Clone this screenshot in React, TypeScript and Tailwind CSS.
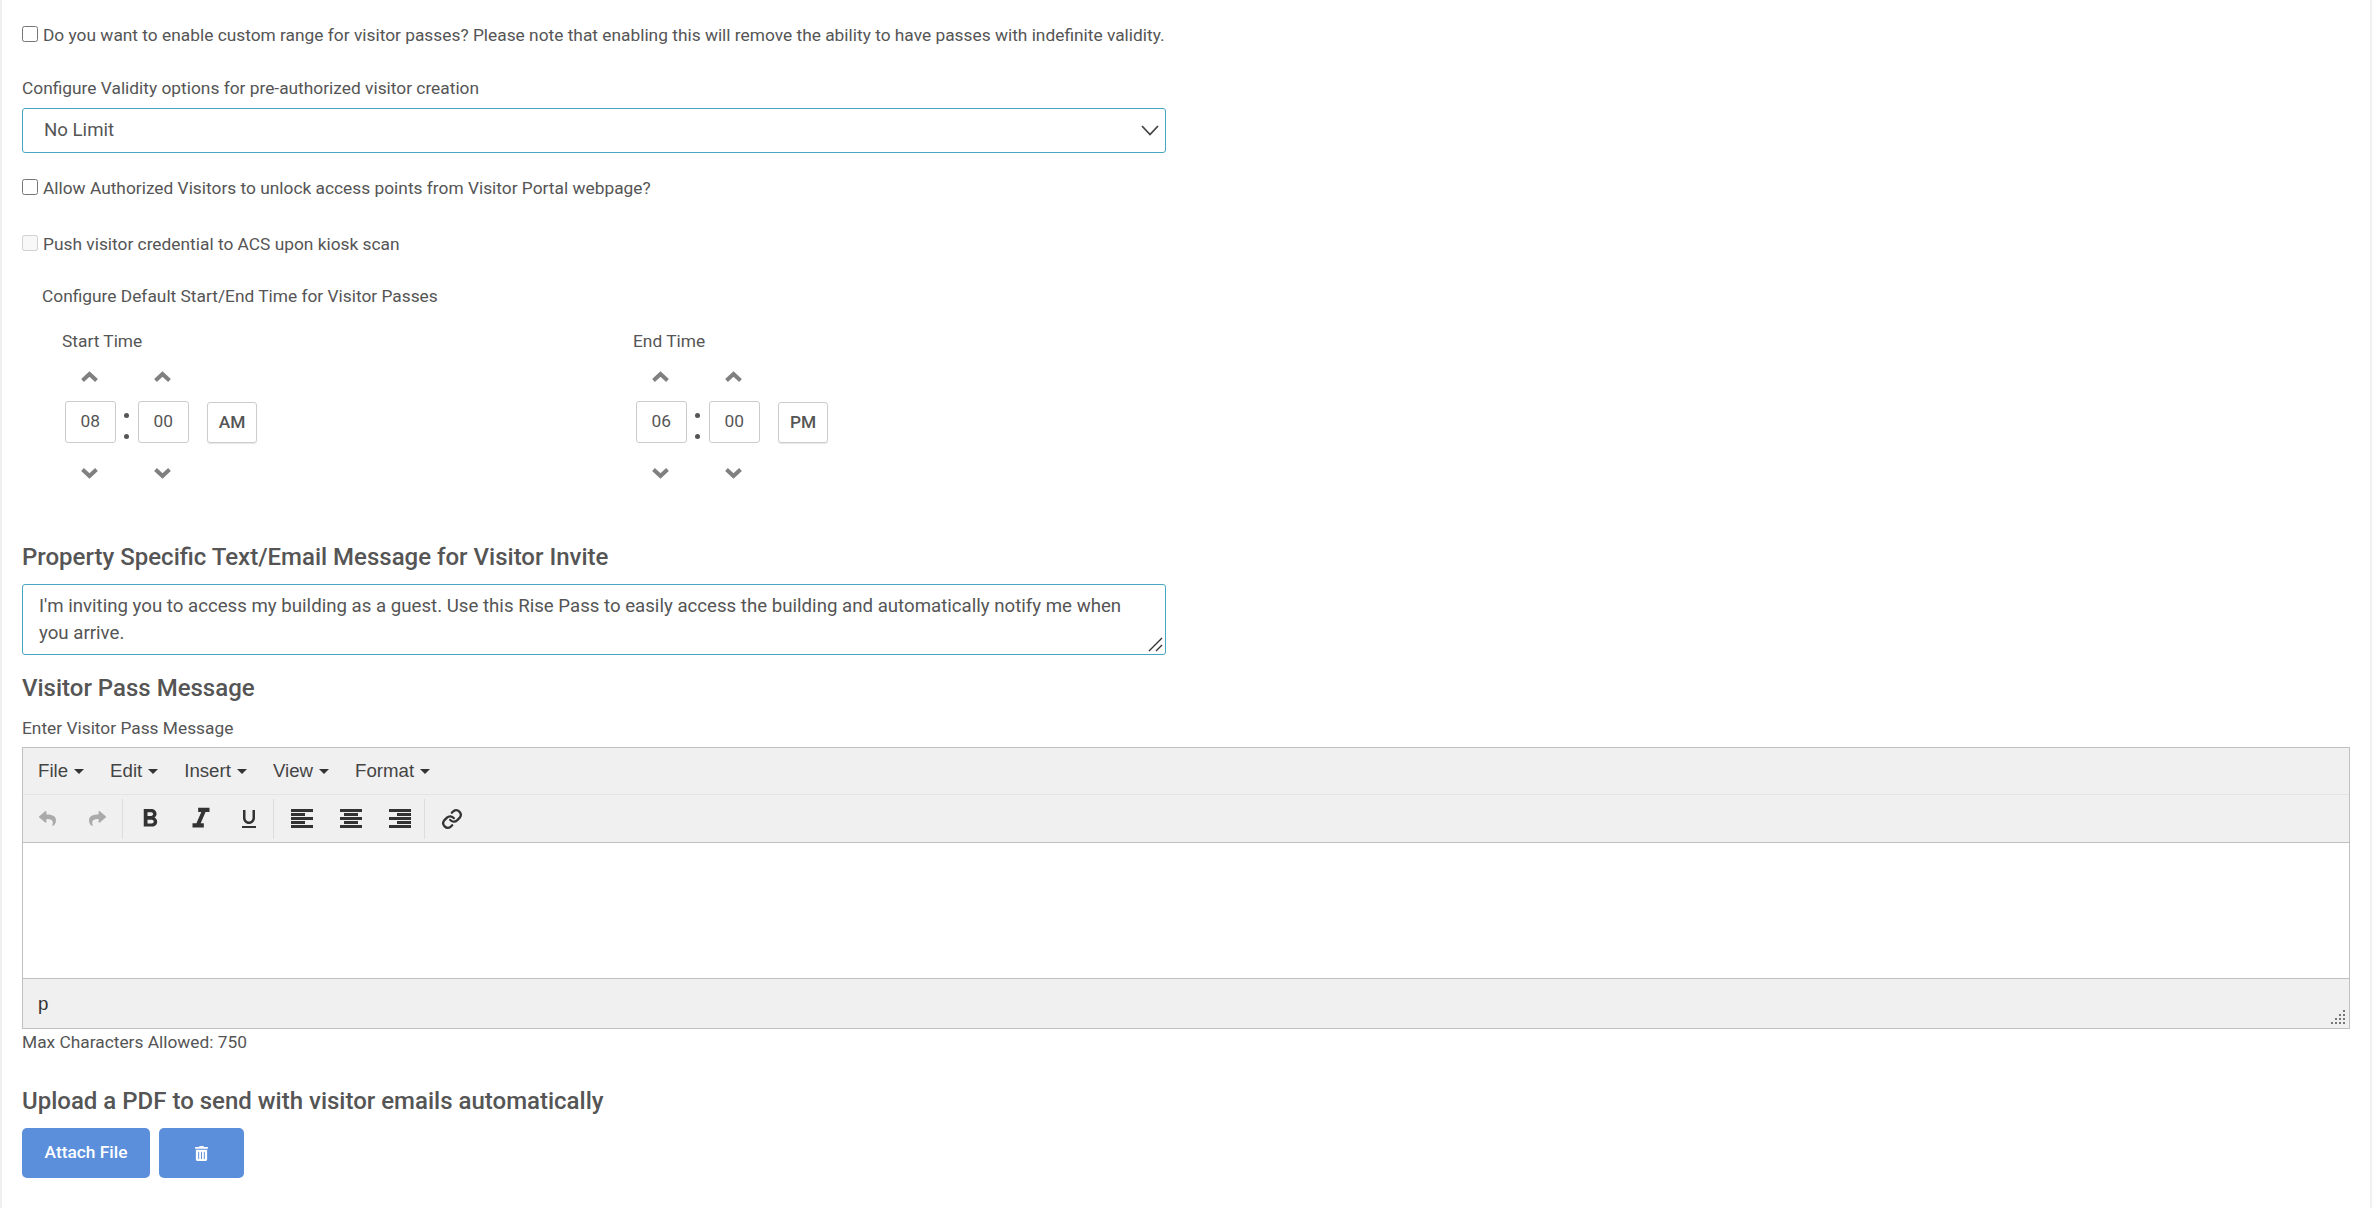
import { FaReply, FaShare, FaTrashAlt } from 'react-icons/fa'
import { MdFormatBold, MdFormatItalic, MdFormatUnderlined } from 'react-icons/md'

const menuItems = ['File', 'Edit', 'Insert', 'View', 'Format']

function AlignIcon({ side }: { side: 'left' | 'center' | 'right' }) {
  // short bars sit against the side the text is aligned to
  const shortX = side === 'left' ? 0 : side === 'center' ? 4 : 8
  return (
    <svg width="22" height="19" viewBox="0 0 22 19" fill="#333">
      <rect x="0" y="0" width="22" height="3" />
      <rect x={shortX} y="4" width="14" height="3" />
      <rect x="0" y="8" width="22" height="3" />
      <rect x={shortX} y="12" width="14" height="3" />
      <rect x="0" y="16" width="22" height="3" />
    </svg>
  )
}

function Chevron({ down }: { down?: boolean }) {
  return (
    <svg width="17" height="12" viewBox="0 0 17 12" fill="none" stroke="#808080" strokeWidth="4">
      <path d={down ? 'M1.500 2.500 8.500 9 15.500 2.500' : 'M1.500 9.500 8.500 3 15.500 9.500'} />
    </svg>
  )
}

function TimeColumn({ value }: { value: string }) {
  return (
    <div className="flex w-[50.5px] flex-col items-center pt-[3px]">
      <div className="pr-[2px]">
        <Chevron />
      </div>
      <div className="mb-[24px] mt-[18px] flex h-[42px] w-full items-center justify-center rounded-[3px] border border-[#ccc] text-[17.33px] text-[#555]">
        {value}
      </div>
      <div className="pr-[2px]">
        <Chevron down />
      </div>
    </div>
  )
}

function TimePicker({ label, hour, minute, period }: { label: string; hour: string; minute: string; period: string }) {
  return (
    <div className="w-[571px] shrink-0">
      <div className="leading-[24px]">{label}</div>
      <div className="ml-[3px] mt-[15px] flex">
        <TimeColumn value={hour} />
        <div className="flex w-[22.5px] flex-col items-center pt-[45px]">
          <span className="h-[5px] w-[5px] rounded-full bg-[#555]" />
          <span className="mt-[16px] h-[5px] w-[5px] rounded-full bg-[#555]" />
        </div>
        <TimeColumn value={minute} />
        <div className="ml-[18.5px] mt-[34px] flex h-[41px] w-[50px] items-center justify-center rounded-[3px] border border-[#ccc] text-[17.33px] font-medium text-[#555] shadow-[0_1px_1px_rgba(0,0,0,0.1)]">
          {period}
        </div>
      </div>
    </div>
  )
}

export default function App() {
  return (
    <div className="min-h-[1208px] border-x-[2px] border-[#f0f0f0] px-[20px] pt-[24px] font-['Roboto',sans-serif] text-[17.33px] text-[#555]">
      <div className="w-[1144px]">
        <label className="flex h-[22px] items-center">
          <input type="checkbox" className="mb-[2px] mr-[5px] h-[16px] w-[16px]" />
          <span className="mt-[2px]">Do you want to enable custom range for visitor passes? Please note that enabling this will remove the ability to have passes with indefinite validity.</span>
        </label>

        <div className="mt-[30px] leading-[24px]">Configure Validity options for pre-authorized visitor creation</div>
        <div className="mt-[8px] flex h-[45px] items-center justify-between rounded-[3px] border border-[#46a6c4] pb-[1px] pl-[21px] pr-[6px] text-[18.67px]">
          <span>No Limit</span>
          <svg width="18" height="11" viewBox="0 0 18 11" fill="none" stroke="#444" strokeWidth="1.800">
            <path d="M1 1 9 9.500 17 1" />
          </svg>
        </div>

        <label className="mt-[24px] flex h-[22px] items-center">
          <input type="checkbox" className="mb-[2px] mr-[5px] h-[16px] w-[16px]" />
          <span className="mt-[2px]">Allow Authorized Visitors to unlock access points from Visitor Portal webpage?</span>
        </label>

        <label className="mt-[34px] flex h-[22px] items-center">
          <input type="checkbox" disabled className="mb-[2px] mr-[5px] h-[16px] w-[16px]" />
          <span className="mt-[2px]">Push visitor credential to ACS upon kiosk scan</span>
        </label>

        <div className="ml-[20px] mt-[29px] leading-[24px]">Configure Default Start/End Time for Visitor Passes</div>

        <div className="ml-[40px] mt-[21px] flex">
          <TimePicker label="Start Time" hour="08" minute="00" period="AM" />
          <TimePicker label="End Time" hour="06" minute="00" period="PM" />
        </div>

        <h3 className="mt-[62px] text-[24px] font-medium leading-[32px]">Property Specific Text/Email Message for Visitor Invite</h3>
        <div className="relative mt-[11px] h-[71px] rounded-[3px] border border-[#46a6c4] px-[16px] pt-[8px] text-[18.67px] leading-[27px]">
          I'm inviting you to access my building as a guest. Use this Rise Pass to easily access the building and automatically notify me when you arrive.
          <svg className="absolute bottom-[2px] right-[2px]" width="16" height="16" viewBox="0 0 16 16" stroke="#333" strokeWidth="1.400">
            <path d="M2 15 15 2M9 15 15 9" />
          </svg>
        </div>

        <h3 className="mt-[17px] text-[24px] font-medium leading-[32px]">Visitor Pass Message</h3>
      </div>

      <div className="mt-[12px] leading-[24px]">Enter Visitor Pass Message</div>

      <div className="mt-[7px] w-[2328px] border border-[#c0c0c0] font-['Liberation_Sans',sans-serif] text-[#333]">
        <div className="flex h-[47px] items-center gap-[26px] border-b border-[#e4e4e4] bg-[#f0f0f0] pl-[15px] text-[18.67px]">
          {menuItems.map((item) => (
            <span key={item} className="flex items-center gap-[6px] text-[#444]">
              {item}
              <span className="h-0 w-0 border-x-[5px] border-t-[5px] border-x-transparent border-t-[#333]" />
            </span>
          ))}
        </div>
        <div className="flex h-[48px] items-center border-b border-[#c0c0c0] bg-[#f0f0f0]">
          <div className="flex h-[40px] w-[100px] items-center justify-around border-r border-[#ddd] text-[#aaa]">
            <FaReply size={17} />
            <FaShare size={17} />
          </div>
          <div className="flex h-[40px] w-[151px] items-center justify-around border-r border-[#ddd] px-[2px] text-[#333]">
            <MdFormatBold size={30} />
            <MdFormatItalic size={34} />
            <MdFormatUnderlined size={24} />
          </div>
          <div className="flex h-[40px] w-[151px] items-center justify-around border-r border-[#ddd] pl-[3px]">
            <AlignIcon side="left" />
            <AlignIcon side="center" />
            <AlignIcon side="right" />
          </div>
          <div className="ml-[16px]">
            <svg width="22" height="22" viewBox="0 0 24 24" fill="none" stroke="#333" strokeWidth="2.500" strokeLinecap="round" strokeLinejoin="round">
              <path d="M10 13a5 5 0 0 0 7.500.5l3-3a5 5 0 0 0-7-7l-1.700 1.700" />
              <path d="M14 11a5 5 0 0 0-7.500-.5l-3 3a5 5 0 0 0 7 7l1.700-1.700" />
            </svg>
          </div>
        </div>
        <div className="h-[135px] bg-white" />
        <div className="relative flex h-[50px] items-center border-t border-[#c0c0c0] bg-[#f0f0f0] pl-[15px] text-[18.67px]">
          p
          <svg className="absolute bottom-[4px] right-[4px]" width="14" height="14" viewBox="0 0 14 14" fill="#777">
            <path d="M12 0h2v2h-2zM8 4h2v2H8zM12 4h2v2h-2zM4 8h2v2H4zM8 8h2v2H8zM12 8h2v2h-2zM0 12h2v2H0zM4 12h2v2H4zM8 12h2v2H8zM12 12h2v2h-2z" />
          </svg>
        </div>
      </div>

      <div className="mt-[1px] leading-[24px]">Max Characters Allowed: 750</div>

      <h3 className="mt-[31px] text-[24px] font-medium leading-[32px]">Upload a PDF to send with visitor emails automatically</h3>

      <div className="mt-[11px] flex gap-[9px]">
        <button className="h-[50px] w-[128px] rounded-[5px] bg-[#5b8fdc] text-[17.33px] font-medium text-white">Attach File</button>
        <button className="flex h-[50px] w-[85px] items-center justify-center rounded-[5px] bg-[#5b8fdc] text-white">
          <FaTrashAlt size={15} />
        </button>
      </div>
    </div>
  )
}
